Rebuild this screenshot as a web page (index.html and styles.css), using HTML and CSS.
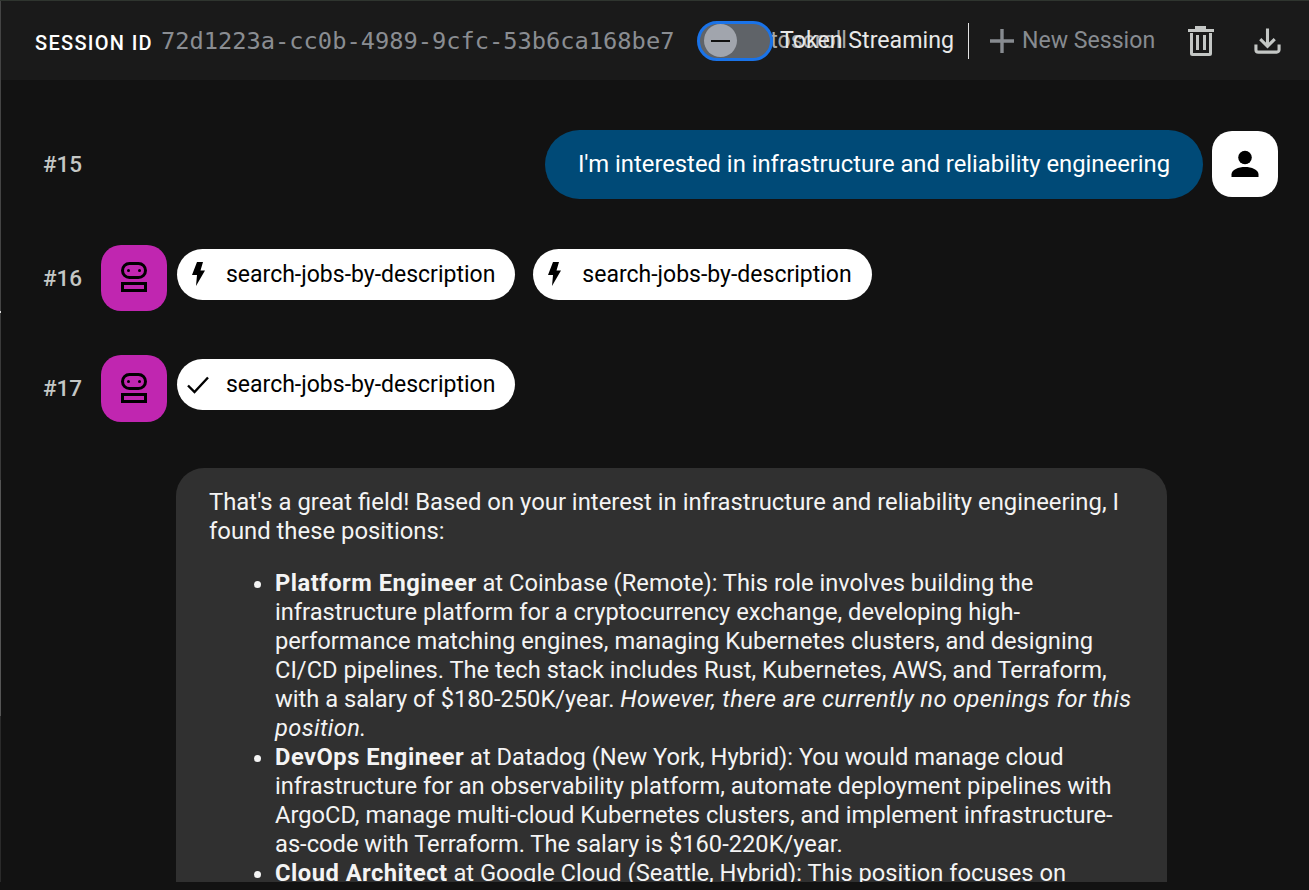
FILE: index.html
```html
<!DOCTYPE html>
<html lang="en">
<head>
<meta charset="utf-8">
<title>Session</title>
<link rel="stylesheet" href="styles.css">
</head>
<body>
<div class="app">
  <header class="topbar">
    <span class="session-label">SESSION ID</span>
    <span class="session-id">72d1223a-cc0b-4989-9cfc-53b6ca168be7</span>
    <div class="toggle-wrap">
      <span class="ghost">Autoscroll</span>
      <div class="toggle"><div class="knob"><span class="knob-dash"></span></div></div>
      <span class="stream-label">Token Streaming</span>
    </div>
    <span class="divider"></span>
    <button class="new-session">
      <svg class="plus" viewBox="0 0 24 24"><path d="M12 0v24M0 12h24" fill="none" stroke="currentColor" stroke-width="3.400"/></svg>
      New Session
    </button>
    <svg class="top-icon trash" viewBox="0 0 26 30"><path d="M7 0h11v3h8v3H0V3h7zM2 7h22v20.500a2.500 2.500 0 0 1-2.500 2.500h-17A2.500 2.500 0 0 1 2 27.500zm3 0v20h16V7zm3 2h3v15H8zm7 0h3v15h-3z" fill="#c4c7c5" fill-rule="evenodd"/></svg>
    <svg class="top-icon download" viewBox="0 0 28 26"><path d="M14 0v18M6.500 11l7.500 7.500 7.500-7.500M2 16.500V22a2.500 2.500 0 0 0 2.500 2.500h19A2.500 2.500 0 0 0 26 22v-5.500" fill="none" stroke="#c4c7c5" stroke-width="3.200"/></svg>
  </header>

  <main class="messages">
    <div class="row row-user">
      <span class="num">#15</span>
      <div class="user-bubble">I'm interested in infrastructure and reliability engineering</div>
      <div class="avatar avatar-user">
        <svg viewBox="0 0 28 28" class="avatar-icon"><circle cx="14" cy="7.500" r="6.800"/><path d="M0.500 27v-2.500c0-5 7-7.500 13.500-7.500s13.500 2.500 13.500 7.500V27z"/></svg>
      </div>
    </div>

    <div class="row row-tool row-16">
      <span class="num">#16</span>
      <div class="avatar avatar-bot">
        <svg viewBox="0 0 26 30" class="bot-icon"><path d="M8.500 1.500h9a7 7 0 0 1 0 14h-9a7 7 0 0 1 0-14zM1.500 21.500h23v7h-23z" fill="none" stroke="#000" stroke-width="3"/><circle cx="7.500" cy="8.500" r="1.500"/><circle cx="18.500" cy="8.500" r="1.500"/></svg>
      </div>
      <div class="chip">
        <svg viewBox="0 0 14 24" class="bolt"><path d="M6 0h6L9.500 8.500H14L5 24l1-11H1z"/></svg>
        <span>search-jobs-by-description</span>
      </div>
      <div class="chip chip-second">
        <svg viewBox="0 0 14 24" class="bolt"><path d="M6 0h6L9.500 8.500H14L5 24l1-11H1z"/></svg>
        <span>search-jobs-by-description</span>
      </div>
    </div>

    <div class="row row-tool row-17">
      <span class="num">#17</span>
      <div class="avatar avatar-bot">
        <svg viewBox="0 0 26 30" class="bot-icon"><path d="M8.500 1.500h9a7 7 0 0 1 0 14h-9a7 7 0 0 1 0-14zM1.500 21.500h23v7h-23z" fill="none" stroke="#000" stroke-width="3"/><circle cx="7.500" cy="8.500" r="1.500"/><circle cx="18.500" cy="8.500" r="1.500"/></svg>
      </div>
      <div class="chip">
        <svg viewBox="0 0 22 18" class="check"><path d="M1 9.500l6.500 6.500L21 1.500" fill="none" stroke="#000" stroke-width="2.400"/></svg>
        <span>search-jobs-by-description</span>
      </div>
    </div>

    <article class="answer">
      <p class="intro">That's a great field! Based on your interest in infrastructure and reliability engineering, I<br>found these positions:</p>
      <ul class="jobs">
        <li><strong>Platform Engineer</strong> at Coinbase (Remote): This role involves building the<br>infrastructure platform for a cryptocurrency exchange, developing high-<br>performance matching engines, managing Kubernetes clusters, and designing<br>CI/CD pipelines. The tech stack includes Rust, Kubernetes, AWS, and Terraform,<br>with a salary of $180-250K/year. <em>However, there are currently no openings for this<br>position.</em></li>
        <li><strong>DevOps Engineer</strong> at Datadog (New York, Hybrid): You would manage cloud<br>infrastructure for an observability platform, automate deployment pipelines with<br>ArgoCD, manage multi-cloud Kubernetes clusters, and implement infrastructure-<br>as-code with Terraform. The salary is $160-220K/year.</li>
        <li><strong>Cloud Architect</strong> at Google Cloud (Seattle, Hybrid): This position focuses on<br>designing multi-cloud architectures and reliability.</li>
      </ul>
    </article>
  </main>
</div>
</body>
</html>
```
FILE: styles.css
```css
* { box-sizing: border-box; }
html, body { margin: 0; height: 100%; background: #121212; overflow: hidden; }
body { font-family: Roboto, "Noto Sans", sans-serif; color: #fff; }
.app { position: relative; height: 882px; display: flex; flex-direction: column; overflow: hidden; padding-left: 1px; border-top: 1px solid #2f352f; }
.app::before { content: ""; position: absolute; left: 0; top: 0; bottom: 0; width: 1px; background: linear-gradient(to bottom, #444 0, #444 310px, #ddd 310px, #ddd 312px, #3a3a3a 312px, #3a3a3a 479px, #555 479px, #555 715px, #2a2a2a 715px); }
.topbar { height: 79px; flex: none; background: #1a1a1a; display: flex; align-items: center; padding-left: 34px; }
.session-label { font-size: 20px; font-weight: 500; letter-spacing: 1.3px; margin-top: 5px; white-space: nowrap; width: 126px; }
.session-id { font-family: "DejaVu Sans Mono", monospace; font-size: 23.7px; color: #8a8d92; width: 536px; white-space: nowrap; }
.toggle-wrap { position: relative; width: 271px; height: 40px; display: flex; align-items: center; }
.toggle { position: relative; width: 76px; height: 40px; border-radius: 20px; background: #5f6368; border: 3px solid #1a73e8; padding: 0 0 0 4px; display: flex; align-items: center; }
.knob { width: 33px; height: 33px; border-radius: 50%; background: #a1a5ad; display: flex; align-items: center; justify-content: center; }
.knob-dash { width: 19px; height: 2px; background: #111; }
.ghost { position: absolute; left: 0; top: 5px; width: 150px; text-align: right; font-size: 23.2px; color: #a8a8a8; white-space: nowrap; overflow: hidden; }
.stream-label { position: absolute; left: 83px; top: 5px; font-size: 23.2px; color: #e8e8e8; white-space: nowrap; }
.divider { width: 1px; height: 36px; background: #e3e3e3; flex: none; }
.new-session { background: none; border: 0; padding: 0; margin-left: 21px; font: inherit; font-size: 23.1px; color: #878b90; display: flex; align-items: center; gap: 8px; width: 198px; white-space: nowrap; }
.plus { width: 24px; height: 24px; flex: none; }
.top-icon { flex: none; display: block; }
.trash { width: 26px; height: 30px; }
.download { width: 27px; height: 26px; margin-left: 40px; }
.messages { flex: 1; overflow: hidden; position: relative; padding: 50px 31px 0 42px; }
.row { display: flex; align-items: center; }
.num { font-size: 22.5px; font-weight: 500; color: #c4c7c5; width: 58px; flex: none; }
.row-user { height: 68px; }
.user-bubble { margin-left: auto; align-self: flex-start; height: 69px; width: 658px; border-radius: 34.500px; background: #004a77; font-size: 23.8px; line-height: 68px; text-align: center; white-space: nowrap; }
.avatar { width: 66px; height: 66px; border-radius: 20px; display: flex; align-items: center; justify-content: center; flex: none; }
.avatar-user { background: #fff; margin-left: 9px; }
.avatar-icon { width: 28px; height: 28px; }
.avatar-bot { background: #c026b0; }
.bot-icon { width: 26px; height: 30px; margin-top: -2px; }
.row-16 { margin-top: 47px; }
.row-17 { margin-top: 44px; }
.row-17 .avatar { height: 67px; }
.row-tool { align-items: flex-start; height: 66px; }
.row-tool .num { align-self: center; }
.chip { background: #fff; color: #000; height: 51px; border-radius: 26px; margin: 4px 0 0 10px; display: flex; align-items: center; padding: 0 20px 1px 49px; font-size: 23px; position: relative; white-space: nowrap; }
.chip-second { margin-left: 18px; }
.bolt { position: absolute; left: 14px; top: 13px; width: 14px; height: 24px; }
.check { position: absolute; left: 10px; top: 17px; width: 22px; height: 18px; }
.answer { margin: 47px 0 0 133px; width: 991px; background: #303030; border-radius: 28px 28px 0 0; padding: 20px 33px 40px; font-size: 23.7px; line-height: 29px; color: #f4f4f4; }
.intro { margin: 0; font-size: 23.85px; }
.jobs { margin: 23px 0 0; padding: 0 0 0 66px; }
.jobs strong { font-weight: 700; letter-spacing: 0.5px; }
.jobs em { letter-spacing: 0.37px; }
```
